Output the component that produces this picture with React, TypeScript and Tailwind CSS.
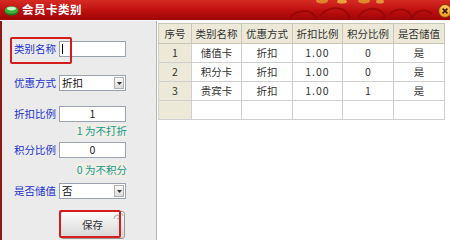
import type { ReactNode } from "react"

type CardRow = {
  no: number
  name: string
  mode: string
  rate: string
  points: string
  stored: string
}

const ROWS: CardRow[] = [
  { no: 1, name: "储值卡", mode: "折扣", rate: "1.00", points: "0", stored: "是" },
  { no: 2, name: "积分卡", mode: "折扣", rate: "1.00", points: "0", stored: "是" },
  { no: 3, name: "贵宾卡", mode: "折扣", rate: "1.00", points: "1", stored: "是" },
]

const COLUMNS = [
  { title: "序号", width: "w-[33px]" },
  { title: "类别名称", width: "w-[50px]" },
  { title: "优惠方式", width: "w-[51px]" },
  { title: "折扣比例", width: "w-[50px]" },
  { title: "积分比例", width: "w-[51px]" },
  { title: "是否储值", width: "w-[51px]" },
]

const FONT = "font-['Noto_Sans_CJK_SC',sans-serif]"

function TitleIcon() {
  return (
    <svg width="15" height="11" viewBox="0 0 15 11">
      <ellipse cx="7.5" cy="6" rx="7" ry="4.5" fill="#1f7a1f" />
      <ellipse cx="7.5" cy="5" rx="6.5" ry="3.8" fill="#3cb43c" />
      <ellipse cx="7.5" cy="3.6" rx="4.5" ry="1.8" fill="#e8ffe8" opacity="0.85" />
    </svg>
  )
}

function Swirls() {
  return (
    <svg
      width="160"
      height="20"
      viewBox="0 0 160 20"
      className="absolute right-[10px] top-0"
      fill="none"
    >
      <path d="M10 18c6-8 18-9 24-3s-2 10-7 7" stroke="#8e0505" strokeWidth="2" opacity="0.7" />
      <path d="M40 16c8-10 22-10 28-2 4 6-4 9-8 5" stroke="#8e0505" strokeWidth="2" opacity="0.7" />
      <path d="M78 18c4-9 16-12 24-6 6 5 0 10-5 7" stroke="#8e0505" strokeWidth="2" opacity="0.7" />
      <path d="M110 14c6-6 16-6 20 0s-3 8-7 5" stroke="#8e0505" strokeWidth="2" opacity="0.7" />
      <path d="M132 18c4-8 14-10 20-4" stroke="#8e0505" strokeWidth="2" opacity="0.7" />
      <ellipse cx="42" cy="1" rx="6" ry="2.5" fill="#e0a030" opacity="0.8" />
      <ellipse cx="62" cy="1.5" rx="5" ry="2" fill="#f0c040" opacity="0.8" />
      <ellipse cx="84" cy="1" rx="6" ry="2.5" fill="#e0a030" opacity="0.8" />
      <ellipse cx="100" cy="1.5" rx="4" ry="2" fill="#f0c040" opacity="0.7" />
    </svg>
  )
}

function CloseButton() {
  return (
    <svg width="14" height="14" viewBox="0 0 14 14" className="absolute left-[438px] top-[4px]">
      <circle cx="7" cy="7" r="6.4" fill="#f2a22a" stroke="#7a3a00" strokeWidth="1" />
      <circle cx="7" cy="5.4" r="4.4" fill="#ffd070" opacity="0.6" />
      <path d="M4.6 4.6l4.8 4.8M9.4 4.6l-4.8 4.8" stroke="#3a1a00" strokeWidth="1.7" />
    </svg>
  )
}

function FieldRow({ label, children, className = "" }: { label: string; children: ReactNode; className?: string }) {
  return (
    <div className={`relative flex items-center pl-[12px] ${className}`}>
      <span className="w-[45px] text-[10.5px] leading-[16px] text-[#1c32d0]">{label}</span>
      {children}
    </div>
  )
}

function TextBox({ value, center = false, caret = false }: { value?: string; center?: boolean; caret?: boolean }) {
  return (
    <div
      className={`flex h-[16px] w-[67px] items-center border border-[#9aa3ad] bg-white text-[10.5px] text-[#222] ${
        center ? "justify-center" : "justify-start"
      }`}
    >
      {caret && <span className="ml-[2px] h-[10px] w-[1px] bg-black" />}
      {value}
    </div>
  )
}

function ComboBox({ value }: { value: string }) {
  return (
    <div className="flex h-[16px] w-[67px] items-center justify-between border border-[#9aa3ad] bg-white pl-[2px] pr-[1px] text-[10.5px] text-[#111]">
      <span>{value}</span>
      <span className="flex h-[12px] w-[10px] items-center justify-center border border-[#b0b0b0] bg-gradient-to-b from-[#fafafa] to-[#dcdcdc]">
        <svg width="5" height="3" viewBox="0 0 5 3">
          <path d="M0 0h5L2.5 3z" fill="#333" />
        </svg>
      </span>
    </div>
  )
}

function Hint({ text, className = "" }: { text: string; className?: string }) {
  return (
    <div className={`flex justify-end pr-[29px] ${className}`}>
      <span className="flex h-[14px] w-[52px] items-center justify-end bg-[#f0eee5] text-[10.5px] text-[#139a88]">
        {text}
      </span>
    </div>
  )
}

export default function App() {
  return (
    <div className={`flex h-[240px] w-[450px] flex-col overflow-hidden bg-[#ebebeb] ${FONT}`}>
      <div className="relative flex h-[20px] shrink-0 items-center gap-[3px] bg-gradient-to-b from-[#d62a24] via-[#c01010] to-[#9e0606] pl-[4px]">
        <Swirls />
        <TitleIcon />
        <span className="relative text-[11.5px] font-bold tracking-[0.5px] text-white">会员卡类别</span>
        <CloseButton />
      </div>

      <div className="flex flex-1 border-t border-[#f6f6f6]">
        <div className="flex w-[156px] shrink-0 flex-col border-l-2 border-[#8c1a14] bg-[#ebebeb]">
          <FieldRow label="类别名称" className="mt-[20px]">
            <TextBox caret />
            <span className="absolute left-[8px] top-[-4px] h-[27px] w-[62px] rounded-[2px] border-2 border-[#d41e1e]" />
          </FieldRow>
          <FieldRow label="优惠方式" className="mt-[18px]">
            <ComboBox value="折扣" />
          </FieldRow>
          <FieldRow label="折扣比例" className="mt-[15px]">
            <TextBox value="1" center />
          </FieldRow>
          <Hint text="1 为不打折" className="mt-[2px]" />
          <FieldRow label="积分比例" className="mt-[4px]">
            <TextBox value="0" center />
          </FieldRow>
          <Hint text="0 为不积分" className="mt-[5px]" />
          <FieldRow label="是否储值" className="mt-[6px]">
            <ComboBox value="否" />
          </FieldRow>
          <div className="relative ml-[58px] mt-[12px] h-[28px] w-[65px]">
            <button className="flex h-full w-full items-center justify-center rounded-[3px] border border-[#9a9a9a] bg-gradient-to-b from-[#fbfbfb] to-[#d6d6d6] text-[10.5px] text-[#333]">
              保存
            </button>
            <svg width="12" height="9" viewBox="0 0 12 9" className="absolute right-[1px] top-[1px]" fill="none">
              <path d="M2 7c0-3 3-5 5-3s-1 4-2 2M7 3c1-2 4-2 4 1" stroke="#b8b8b8" strokeWidth="1.2" />
            </svg>
            <span className="absolute left-[-1px] top-[-1px] h-[28px] w-[62px] rounded-[2px] border-2 border-[#d41e1e]" />
          </div>
        </div>

        <div className="flex-1 border-l border-[#b4b4b4] bg-white pl-[1px] pt-[2px]">
          <table className="table-fixed border-collapse text-[10.5px] text-[#333]">
            <thead>
              <tr className="h-[20px]">
                {COLUMNS.map((c) => (
                  <th
                    key={c.title}
                    className={`${c.width} border border-[#c9c6b8] bg-[#ece9d8] p-0 text-center font-normal`}
                  >
                    {c.title}
                  </th>
                ))}
              </tr>
            </thead>
            <tbody>
              {ROWS.map((r) => (
                <tr key={r.no} className="h-[19px]">
                  <td className="border border-[#cfcfcf] bg-[#ece9d8] p-0 text-center">{r.no}</td>
                  <td className="border border-[#cfcfcf] p-0 text-center">{r.name}</td>
                  <td className="border border-[#cfcfcf] p-0 text-center">{r.mode}</td>
                  <td className="border border-[#cfcfcf] p-0 text-center tracking-[1px]">{r.rate}</td>
                  <td className="border border-[#cfcfcf] p-0 text-center">{r.points}</td>
                  <td className="border border-[#cfcfcf] p-0 text-center">{r.stored}</td>
                </tr>
              ))}
              <tr className="h-[19px]">
                <td className="border border-[#cfcfcf] bg-[#ece9d8] p-0" />
                <td className="border border-[#cfcfcf] p-0" />
                <td className="border border-[#cfcfcf] p-0" />
                <td className="border border-[#cfcfcf] p-0" />
                <td className="border border-[#cfcfcf] p-0" />
                <td className="border border-[#cfcfcf] p-0" />
              </tr>
            </tbody>
          </table>
        </div>
      </div>
    </div>
  )
}
